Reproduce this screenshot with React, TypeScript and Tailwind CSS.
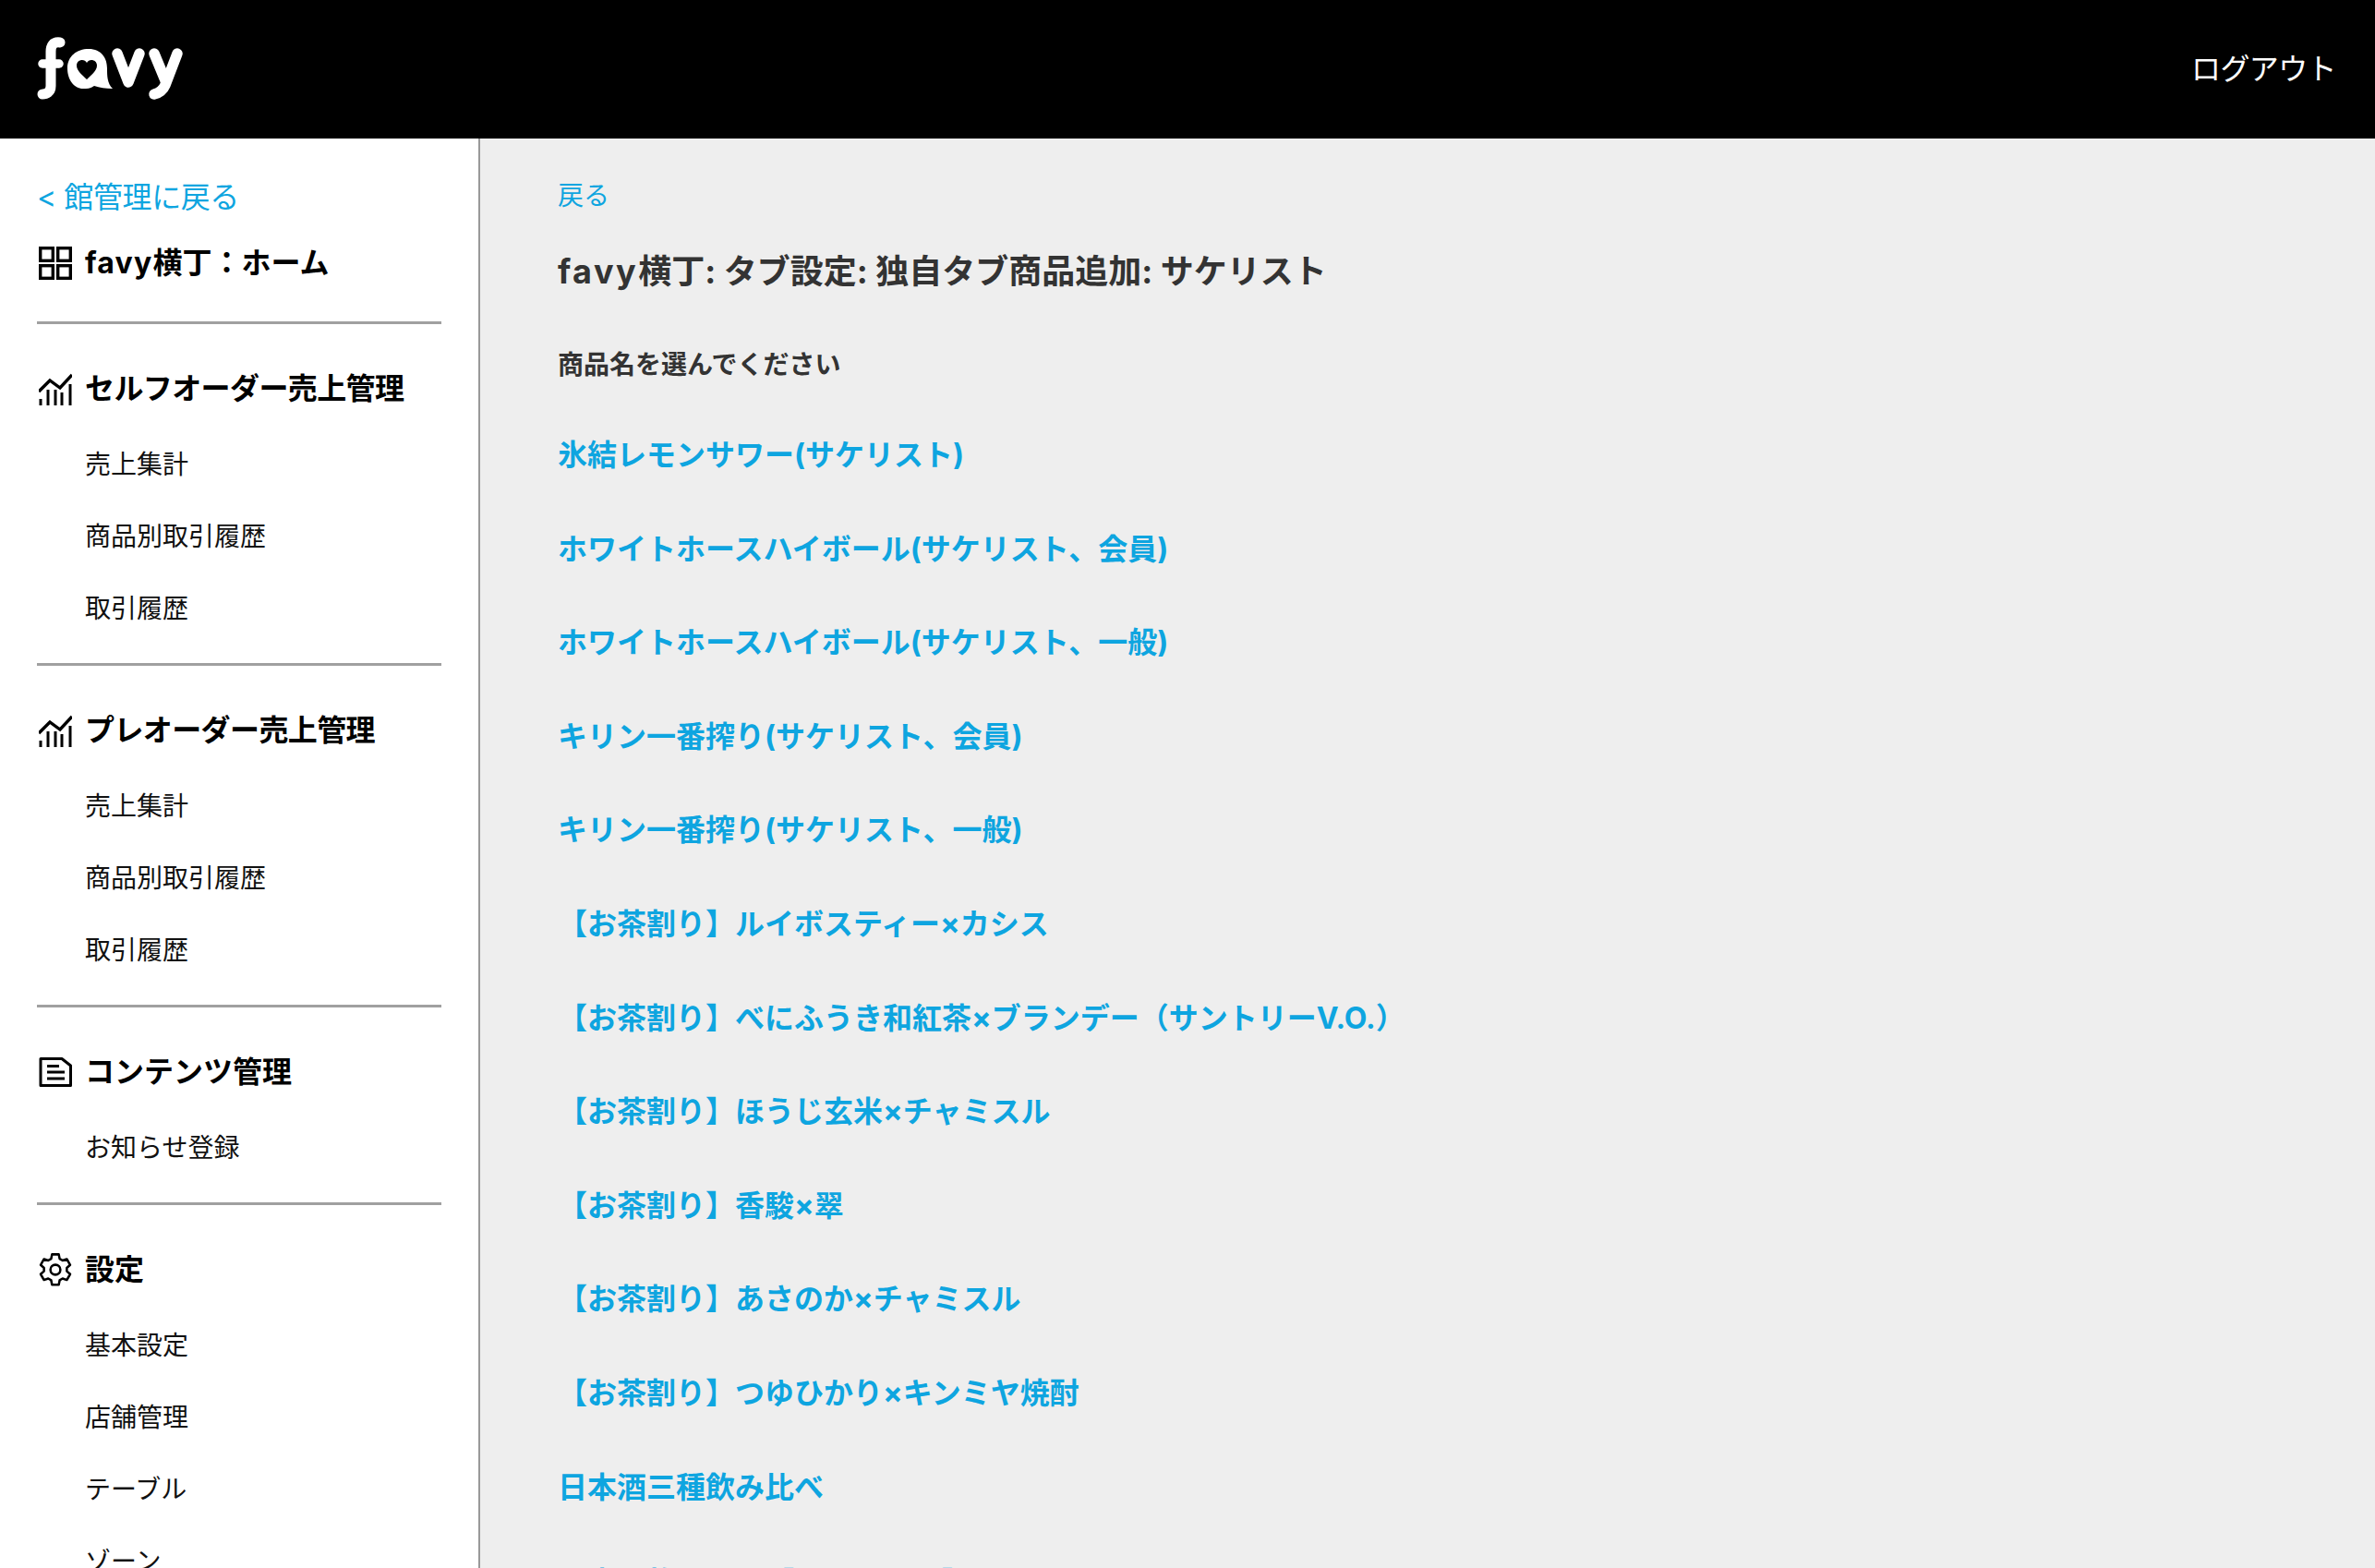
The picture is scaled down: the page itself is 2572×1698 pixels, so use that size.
const font = { fontFamily: 'Inter, "Noto Sans CJK JP", sans-serif' };

function Logo() {
  return (
    <svg width="160" height="70" viewBox="0 0 160 70" className="block" aria-label="favy">
      <g fill="none" stroke="#fff" strokeLinecap="round" strokeLinejoin="round">
        <path d="M25 6 C 17 5, 15 10, 15 16 L 15 53 C 15 60, 10 62, 6 62" strokeWidth="11" />
        <path d="M6 29 H24" strokeWidth="9.5" />
        <path d="M87 18 L99 49 L111 18" strokeWidth="11.5" />
        <path d="M127 18 L139 47" strokeWidth="11.5" />
        <path d="M152 18 L139 52 C 136 59, 131 61, 127 62" strokeWidth="11.5" />
      </g>
      <path d="M33 34 C 33 21, 43 13, 56 13 C 70 13, 76 23, 76 34 C 76 42, 76 50, 82 56 C 74 56, 68 55, 62 53 C 58 56, 54 56, 50 56 C 40 56, 33 46, 33 34 Z" fill="#fff" />
      <path d="M54 46 C 50 42, 43 37, 43 31 C 43 27, 46 25, 49 25 C 51 25, 53 26, 54 28 C 55 26, 57 25, 59 25 C 62 25, 65 27, 65 31 C 65 37, 58 42, 54 46 Z" fill="#000" />
    </svg>
  );
}

function GridIcon() {
  return (
    <svg width="36" height="36" viewBox="0 0 36 36" fill="none" stroke="#000" strokeWidth="3.4" className="ml-[2px]">
      <rect x="1.7" y="1.7" width="13.6" height="13.6" />
      <rect x="20.7" y="1.7" width="13.6" height="13.6" />
      <rect x="1.7" y="20.7" width="13.6" height="13.6" />
      <rect x="20.7" y="20.7" width="13.6" height="13.6" />
    </svg>
  );
}

function ChartIcon() {
  return (
    <svg width="36" height="36" viewBox="0 0 36 36" fill="none" stroke="#000" className="ml-[2px]">
      <path d="M0 21 L12 9 L23 17 L36 3" strokeWidth="3.4" />
      <path d="M2 29 V36 M10 19 V36 M18 19 V36 M25 22 V36 M34 13 V36" strokeWidth="3" />
    </svg>
  );
}

function DocIcon() {
  return (
    <svg width="36" height="32" viewBox="0 0 36 32" fill="none" stroke="#000" strokeWidth="3" strokeLinejoin="round" className="ml-[2px]">
      <path d="M2 1.5 H25 L34.5 9 V30.5 H2 Z" />
      <path d="M9 9.5 H22 M9 16 H28 M9 23 H28" />
    </svg>
  );
}

function GearIcon() {
  return (
    <svg width="40" height="38" viewBox="0 0 24 24" fill="none" stroke="#000" strokeWidth="1.6" strokeLinejoin="round">
      <path d="M9.7 1.5 h4.6 l.6 3 2 1.2 2.9-1 2.3 4-2.3 2 v2.3 l2.3 2-2.3 4-2.9-1-2 1.2-.6 3 h-4.6 l-.6-3-2-1.2-2.9 1-2.3-4 2.3-2 v-2.3 l-2.3-2 2.3-4 2.9 1 2 -1.2 z" />
      <circle cx="12" cy="12" r="3.4" />
    </svg>
  );
}

function SectionHead({ icon, children, tight }: { icon: React.ReactNode; children: React.ReactNode; tight?: boolean }) {
  return (
    <div className="flex h-[40px] items-center text-[32px] font-bold leading-[40px] text-black">
      <div className="flex w-[52px] shrink-0 items-center">{icon}</div>
      <span className={tight ? 'whitespace-nowrap tracking-[-0.6px]' : 'whitespace-nowrap'}>{children}</span>
    </div>
  );
}

function SubItem({ label }: { label: string }) {
  return <div className="h-[78px] whitespace-nowrap pl-[52px] text-[28px] leading-[78px] text-[#111]">{label}</div>;
}

function Rule() {
  return <div className="h-[3px] w-[438px] bg-[#a0a0a0]" />;
}

const items = [
  '氷結レモンサワー(サケリスト)',
  'ホワイトホースハイボール(サケリスト、会員)',
  'ホワイトホースハイボール(サケリスト、一般)',
  'キリン一番搾り(サケリスト、会員)',
  'キリン一番搾り(サケリスト、一般)',
  '【お茶割り】ルイボスティー×カシス',
  '【お茶割り】べにふうき和紅茶×ブランデー（サントリーV.O.）',
  '【お茶割り】ほうじ玄米×チャミスル',
  '【お茶割り】香駿×翠',
  '【お茶割り】あさのか×チャミスル',
  '【お茶割り】つゆひかり×キンミヤ焼酎',
  '日本酒三種飲み比べ',
  '日本酒飲み比べ【サケリスト】',
];

export default function App() {
  return (
    <div className="flex h-[1698px] w-[2572px] flex-col overflow-hidden" style={font}>
      <header className="flex h-[150px] shrink-0 items-center justify-between bg-black pl-[40px] pr-[42px]">
        <Logo />
        <span className="-mt-[1px] text-[32px] tracking-[-0.6px] text-white">ログアウト</span>
      </header>
      <div className="flex min-h-0 flex-1">
        <aside className="w-[520px] shrink-0 overflow-hidden border-r-2 border-[#999] bg-white pl-[40px]">
          <div className="mt-[43px] h-[42px] whitespace-nowrap text-[32px] leading-[42px] tracking-[-0.4px] text-[#0ea5e0]">&lt; 館管理に戻る</div>
          <div className="mt-[30px] pb-[43px]">
            <SectionHead icon={<GridIcon />}>
              <span className="tracking-[1.2px]">favy</span>横丁：ホーム
            </SectionHead>
          </div>
          <Rule />
          <div className="mt-[50px]">
            <SectionHead icon={<ChartIcon />} tight>セルフオーダー売上管理</SectionHead>
            <div className="mt-[23px]">
              <SubItem label="売上集計" />
              <SubItem label="商品別取引履歴" />
              <SubItem label="取引履歴" />
            </div>
          </div>
          <div className="mt-[20px]"><Rule /></div>
          <div className="mt-[50px]">
            <SectionHead icon={<ChartIcon />} tight>プレオーダー売上管理</SectionHead>
            <div className="mt-[23px]">
              <SubItem label="売上集計" />
              <SubItem label="商品別取引履歴" />
              <SubItem label="取引履歴" />
            </div>
          </div>
          <div className="mt-[20px]"><Rule /></div>
          <div className="mt-[50px]">
            <SectionHead icon={<DocIcon />}>コンテンツ管理</SectionHead>
            <div className="mt-[23px]">
              <SubItem label="お知らせ登録" />
            </div>
          </div>
          <div className="mt-[20px]"><Rule /></div>
          <div className="mt-[50px]">
            <SectionHead icon={<GearIcon />}>設定</SectionHead>
            <div className="mt-[23px]">
              <SubItem label="基本設定" />
              <SubItem label="店舗管理" />
              <SubItem label="テーブル" />
              <SubItem label="ゾーン" />
            </div>
          </div>
        </aside>
        <main className="min-w-0 flex-1 overflow-hidden bg-[#eee] pl-[84px]">
          <div className="mt-[41px] text-[28px] leading-[42px] text-[#0ea5e0]">戻る</div>
          <h1 className="mt-[37px] whitespace-nowrap text-[36px] font-bold leading-[48px] text-[#333]">
            <span className="tracking-[2.5px]">favy</span>横丁: タブ設定: 独自タブ商品追加: サケリスト
          </h1>
          <div className="mt-[57px] text-[28px] font-bold leading-[40px] text-[#333]">商品名を選んでください</div>
          <div className="mt-[56px] flex flex-col">
            {items.map((t) => (
              <div key={t} className="h-[101.6px] whitespace-nowrap text-[32px] font-bold leading-[44px] text-[#0ea5e0] last:pt-[2px]">{t}</div>
            ))}
          </div>
        </main>
      </div>
    </div>
  );
}
